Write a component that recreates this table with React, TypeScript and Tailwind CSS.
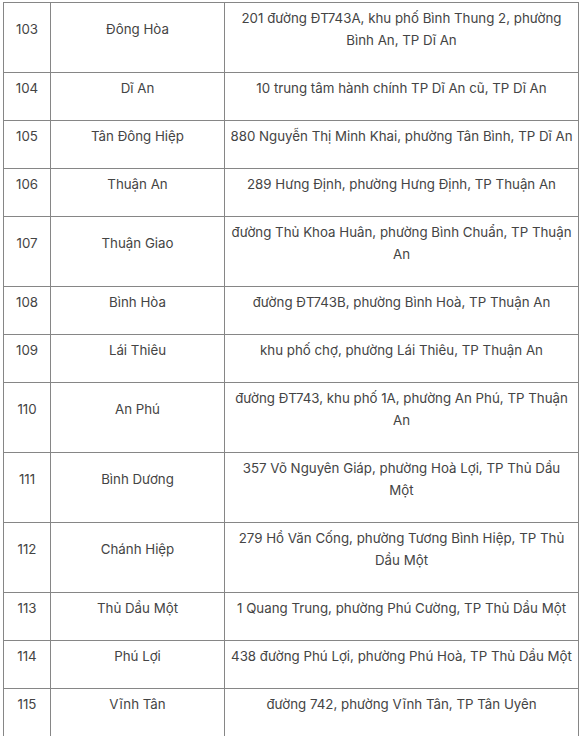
const rows: [string, string, string[]][] = [
  ['103', 'Đông Hòa', ['201 đường ĐT743A, khu phố Bình Thung 2, phường', 'Bình An, TP Dĩ An']],
  ['104', 'Dĩ An', ['10 trung tâm hành chính TP Dĩ An cũ, TP Dĩ An']],
  ['105', 'Tân Đông Hiệp', ['880 Nguyễn Thị Minh Khai, phường Tân Bình, TP Dĩ An']],
  ['106', 'Thuận An', ['289 Hưng Định, phường Hưng Định, TP Thuận An']],
  ['107', 'Thuận Giao', ['đường Thủ Khoa Huân, phường Bình Chuẩn, TP Thuận', 'An']],
  ['108', 'Bình Hòa', ['đường ĐT743B, phường Bình Hoà, TP Thuận An']],
  ['109', 'Lái Thiêu', ['khu phố chợ, phường Lái Thiêu, TP Thuận An']],
  ['110', 'An Phú', ['đường ĐT743, khu phố 1A, phường An Phú, TP Thuận', 'An']],
  ['111', 'Bình Dương', ['357 Võ Nguyên Giáp, phường Hoà Lợi, TP Thủ Dầu', 'Một']],
  ['112', 'Chánh Hiệp', ['279 Hồ Văn Cống, phường Tương Bình Hiệp, TP Thủ', 'Dầu Một']],
  ['113', 'Thủ Dầu Một', ['1 Quang Trung, phường Phú Cường, TP Thủ Dầu Một']],
  ['114', 'Phú Lợi', ['438 đường Phú Lợi, phường Phú Hoà, TP Thủ Dầu Một']],
  ['115', 'Vĩnh Tân', ['đường 742, phường Vĩnh Tân, TP Tân Uyên']],
  ['116', 'Bình Cơ', ['đường ĐT746, phường Bình Cơ, TP Tân Uyên']],
];

function Cell({ children, className = '' }: { children: React.ReactNode; className?: string }) {
  return (
    <td className={`border border-[#868686] px-[4px] py-[4px] text-center ${className}`}>
      <p className="mb-[17px] leading-[22px]">{children}</p>
    </td>
  );
}

export default function App() {
  return (
    <div className="h-[736px] overflow-hidden bg-white pt-[2px] pl-[3px]" style={{ fontFamily: 'Inter, "Noto Sans", sans-serif' }}>
      <table className="w-[575px] table-fixed border-collapse text-[13.3px] text-[#444444]">
        <colgroup>
          <col className="w-[47px]" />
          <col className="w-[174px]" />
          <col className="w-[354px]" />
        </colgroup>
        <tbody>
          {rows.map(([no, name, addr]) => (
            <tr key={no}>
              <Cell className="align-middle">{no}</Cell>
              <Cell className="align-middle">{name}</Cell>
              <Cell className="align-top">
                {addr.map((line, i) => (
                  <span key={i} className="whitespace-nowrap">
                    {i > 0 && <br />}
                    {line}
                  </span>
                ))}
              </Cell>
            </tr>
          ))}
        </tbody>
      </table>
    </div>
  );
}
